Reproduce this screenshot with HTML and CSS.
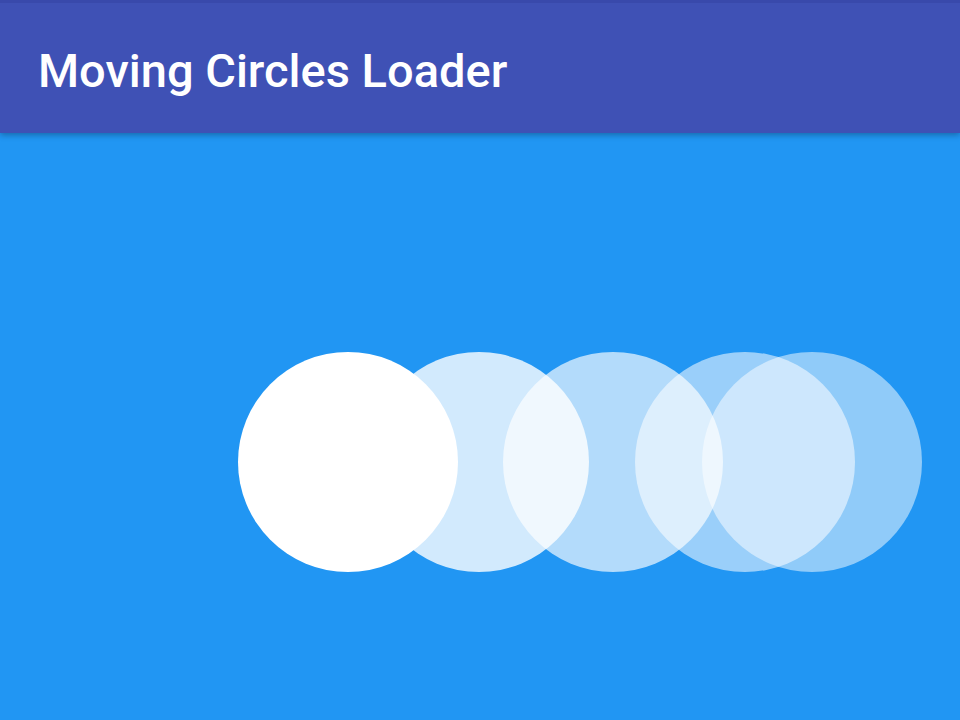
FILE: index.html
```html
<!DOCTYPE html>
<html>
<head>
<meta charset="utf-8">
<link rel="stylesheet" href="styles.css">
</head>
<body>
<header class="appbar">
  <div class="statusbar"></div>
  <h1 class="title">Moving Circles Loader</h1>
</header>
<main class="stage">
  <div class="loader">
    <span class="dot d1"></span>
    <span class="dot d2"></span>
    <span class="dot d3"></span>
    <span class="dot d4"></span>
    <span class="dot d5"></span>
  </div>
</main>
</body>
</html>
```
FILE: styles.css
```css
html, body {
  margin: 0;
  padding: 0;
  height: 100%;
}
body {
  background: #2196F3;
  font-family: Roboto, "Noto Sans", sans-serif;
  overflow: hidden;
}
.appbar {
  position: relative;
  z-index: 2;
  height: 133px;
  background: #3F51B5;
  box-shadow: 0 2px 6px rgba(0,0,0,0.3);
  display: flex;
  flex-direction: column;
}
.statusbar {
  height: 3px;
  background: #3949AB;
}
.title {
  margin: 43px 0 0 38px;
  color: #fff;
  font-size: 47px;
  font-weight: 500;
  line-height: 50px;
  letter-spacing: 0;
}
.stage {
  height: calc(100% - 133px);
  position: relative;
}
.loader {
  position: absolute;
  left: 238px;
  top: 219px;
  width: 684px;
  height: 220px;
}
.dot {
  position: absolute;
  top: 0;
  width: 220px;
  height: 220px;
  border-radius: 50%;
  background: #fff;
}
.d1 { left: 0; opacity: 1; }
.d2 { left: 131px; opacity: 0.8; }
.d3 { left: 265px; opacity: 0.66; }
.d4 { left: 397px; opacity: 0.55; }
.d5 { left: 464px; opacity: 0.5; }
```
